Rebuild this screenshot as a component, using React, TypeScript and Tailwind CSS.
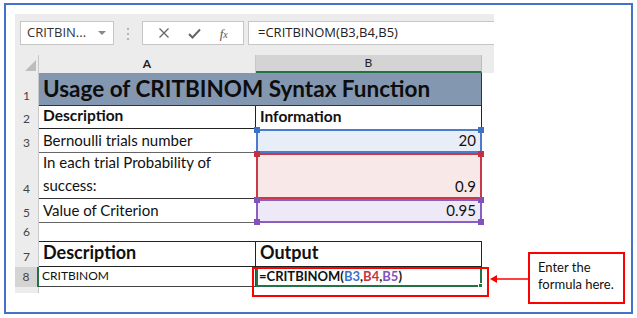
import React from 'react'

const calibri = "font-['Lato','Liberation_Sans',sans-serif]"
const ui = "font-['Open_Sans','Liberation_Sans',sans-serif]"

function RowHead({ n, h, active }: { n: string; h: string; active?: boolean }) {
  return (
    <div
      className={`${h} w-[24px] shrink-0 flex items-end justify-center pb-[1px] text-[12px] text-[#444] ${calibri} ${
        active ? 'bg-[#d4d4d4] border-r-2 border-[#217346]' : 'bg-[#ececec] border-r border-[#c8c8c8]'
      }`}
    >
      {n}
    </div>
  )
}

function Handle({ color, pos }: { color: string; pos: string }) {
  return <span className={`absolute w-[6px] h-[6px] ${color} ${pos}`} />
}

export default function App() {
  return (
    <div className="w-[637px] h-[318px] bg-white pt-[3px] pl-[4px] overflow-hidden">
      <div className="relative w-[629px] h-[311px] border-2 border-[#4472c4] pt-[9px] pl-[9px]">
        {/* toolbar */}
        <div className="w-[479px] h-[41px] bg-[#ececec] flex items-start pt-[7px] pl-[5px]">
          <div className={`w-[94px] h-[24px] bg-white border border-[#c6c6c6] flex items-center pl-[6px] pr-[7px] justify-between text-[13px] text-[#333] ${ui}`}>
            <span>CRITBIN...</span>
            <svg width="8" height="5" viewBox="0 0 8 5">
              <path d="M0 0 L8 0 L4 4 Z" fill="#888" />
            </svg>
          </div>
          <div className="ml-[13px] mt-[7px] flex flex-col gap-[3px]">
            <span className="w-[2px] h-[2px] bg-[#b5b5b5]" />
            <span className="w-[2px] h-[2px] bg-[#b5b5b5]" />
            <span className="w-[2px] h-[2px] bg-[#b5b5b5]" />
          </div>
          <div className="ml-[13px] w-[102px] h-[24px] bg-white border border-[#c6c6c6] flex items-center justify-around px-[6px]">
            <svg width="12" height="12" viewBox="0 0 12 12">
              <path d="M1.5 1.5 L10.5 10.5 M10.5 1.5 L1.5 10.5" stroke="#666" strokeWidth="1.3" />
            </svg>
            <svg width="13" height="11" viewBox="0 0 13 11">
              <path d="M1 6 L4.5 9.5 L12 1.5" stroke="#666" strokeWidth="2" fill="none" />
            </svg>
            <span className="text-[13px] italic text-[#555] font-['Liberation_Serif',serif] leading-none">
              f<span className="text-[10px]">x</span>
            </span>
          </div>
          <div className={`ml-[4px] flex-1 h-[24px] bg-white border-y border-l border-[#c6c6c6] flex items-center pl-[9px] text-[13px] text-[#222] ${ui}`}>
            =CRITBINOM(B3,B4,B5)
          </div>
        </div>

        {/* column headers */}
        <div className={`flex h-[18px] ${calibri} text-[12px] text-[#222]`}>
          <div className="w-[24px] bg-[#ececec] border-r border-[#c8c8c8] flex items-end justify-end pr-[2px] pb-[2px]">
            <svg width="11" height="11" viewBox="0 0 11 11">
              <path d="M11 0 L11 11 L0 11 Z" fill="#bdbdbd" />
            </svg>
          </div>
          <div className="w-[217px] bg-[#ececec] border-r border-[#c8c8c8] flex items-center justify-center font-bold">A</div>
          <div className="w-[226px] bg-[#d4d4d4] border-b-2 border-[#217346] border-r border-r-[#bdbdbd] flex items-center justify-center">B</div>
          <div className="w-[12px] bg-[#ececec]" />
        </div>

        {/* sheet */}
        <div className={`${calibri} text-[#111]`}>
          <div className="flex">
            <RowHead n="1" h="h-[33px]" />
            <div className="w-[443px] h-[33px] bg-[#8497b0] border-b border-r border-[#333] flex items-center pl-[4px] text-[22.5px] font-bold text-[#0d0d0d]">
              Usage of CRITBINOM Syntax Function
            </div>
          </div>
          <div className="flex">
            <RowHead n="2" h="h-[23px]" />
            <div className="w-[217px] h-[23px] border-b border-r border-[#222] flex items-end pb-[1px] pl-[4px] text-[15.5px] font-bold">
              Description
            </div>
            <div className="w-[226px] h-[23px] border-r border-[#222] flex items-end pb-[1px] pl-[4px] text-[15.5px] font-bold">
              Information
            </div>
          </div>
          <div className="flex">
            <RowHead n="3" h="h-[24px]" />
            <div className="w-[217px] h-[24px] border-b border-[#666] flex items-end pb-[1px] pl-[4px] text-[15px]">
              Bernoulli trials number
            </div>
            <div className="relative w-[226px] h-[24px] bg-[#e8eef8] border-2 border-[#4a7ccb] flex items-end justify-end pr-[4px] text-[15px]">
              20
              <Handle color="bg-[#3f72c6]" pos="-left-[4px] -top-[4px]" />
              <Handle color="bg-[#3f72c6]" pos="-right-[4px] -top-[4px]" />
            </div>
          </div>
          <div className="flex">
            <RowHead n="4" h="h-[46px]" />
            <div className="w-[217px] h-[46px] border-b border-[#333] flex items-end pb-[1px] pl-[4px] text-[15px] leading-[23px]">
              In each trial Probability of success:
            </div>
            <div className="relative w-[226px] h-[46px] bg-[#f8e8e8] border-2 border-[#c93a48] flex items-end justify-end pr-[4px] text-[15px]">
              0.9
              <Handle color="bg-[#c4303f]" pos="-left-[4px] -top-[4px]" />
              <Handle color="bg-[#c4303f]" pos="-right-[4px] -top-[4px]" />
            </div>
          </div>
          <div className="flex">
            <RowHead n="5" h="h-[24px]" />
            <div className="w-[217px] h-[24px] border-b border-[#666] flex items-end pb-[1px] pl-[4px] text-[15px]">
              Value of Criterion
            </div>
            <div className="relative w-[226px] h-[24px] bg-[#eee9f6] border-2 border-[#8b5ec4] flex items-end justify-end pr-[4px] text-[15px]">
              0.95
              <Handle color="bg-[#7f53bb]" pos="-left-[4px] -top-[4px]" />
              <Handle color="bg-[#7f53bb]" pos="-right-[4px] -top-[4px]" />
              <Handle color="bg-[#7f53bb]" pos="-left-[4px] -bottom-[4px]" />
              <Handle color="bg-[#7f53bb]" pos="-right-[4px] -bottom-[4px]" />
            </div>
          </div>
          <div className="flex">
            <RowHead n="6" h="h-[19px]" />
            <div className="w-[443px] h-[19px] border-b border-[#222]" />
          </div>
          <div className="flex">
            <RowHead n="7" h="h-[25px]" />
            <div className="w-[217px] h-[25px] border-b border-r border-[#222] flex items-end pl-[4px] text-[18px] font-bold">
              Description
            </div>
            <div className="w-[226px] h-[25px] border-b border-r border-[#222] flex items-end pl-[4px] text-[18px] font-bold">
              Output
            </div>
          </div>
          <div className="flex">
            <RowHead n="8" h="h-[20px]" active />
            <div className="w-[217px] h-[20px] border-b border-r border-[#444] flex items-end pb-[1px] pl-[3px] text-[12px]">
              CRITBINOM
            </div>
            <div className="relative w-[226px] h-[20px] border-2 border-[#217346] flex items-center pl-[1px] text-[13px] font-bold">
              <span>=CRITBINOM(</span>
              <span className="text-[#3e72c7]">B3</span>
              <span>,</span>
              <span className="text-[#c63442]">B4</span>
              <span>,</span>
              <span className="text-[#7f53bb]">B5</span>
              <span>)</span>
              <span className="absolute -right-[3px] -bottom-[3px] w-[5px] h-[5px] bg-[#217346] border border-white" />
            </div>
          </div>
          <div className="flex">
            <div className="w-[24px] h-[6px] bg-[#ececec] border-r border-[#c8c8c8]" />
          </div>
        </div>

        {/* annotation overlays */}
        <div className="absolute left-[246px] top-[262px] w-[237px] h-[30px] border-2 border-[#ff0000]" />
        <svg className="absolute left-[483px] top-[268px]" width="42" height="12" viewBox="0 0 42 12">
          <path d="M42 6 L6 6" stroke="#ff0000" strokeWidth="1.5" />
          <path d="M1 6 L8 2 L8 10 Z" fill="#ff0000" />
        </svg>
        <div className={`absolute left-[522px] top-[247px] w-[97px] h-[52px] border-2 border-[#ff0000] bg-white pl-[8px] pt-[5px] text-[13px] leading-[17px] text-[#111] ${calibri}`}>
          Enter the
          <br />
          formula here.
        </div>
      </div>
    </div>
  )
}
